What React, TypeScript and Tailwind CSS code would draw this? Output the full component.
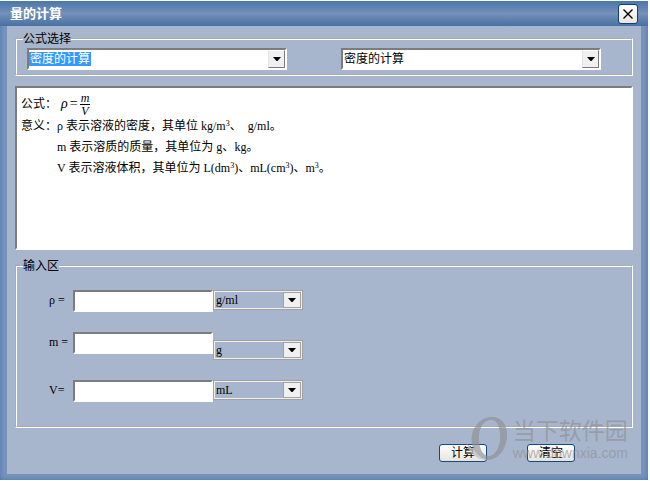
import { ReactNode, useState } from "react";
import clsx from "clsx";

const FORMULAS = ["密度的计算"];

const FIELDS = [
  { id: "rho", label: "ρ =", units: ["g/ml", "kg/m³"], low: false },
  { id: "mass", label: "m =", units: ["g", "kg"], low: true },
  { id: "volume", label: "V=", units: ["mL", "L", "m³"], low: false },
];

const SUNKEN =
  "border-2 border-t-[#7c7c7c] border-l-[#7c7c7c] border-r-white border-b-white";

const Arrow = () => (
  <svg viewBox="0 0 8 4" className="h-1 w-2" aria-hidden="true">
    <path d="M0 0h8L4.5 4h-1z" fill="#000" />
  </svg>
);

const FormulaSelect = ({
  label,
  selected,
}: {
  label: string;
  selected?: boolean;
}) => (
  <div className={clsx("relative flex h-[22px] w-[260px] bg-white", SUNKEN)}>
    <select
      aria-label={label}
      className={clsx(
        "w-full appearance-none pl-px text-xs leading-4 outline-none",
        selected &&
          "bg-[linear-gradient(#3399ff,#3399ff)] bg-[length:62px_14px] bg-[position:0px_2px] bg-no-repeat text-white",
      )}
    >
      {FORMULAS.map(name => (
        <option key={name}>{name}</option>
      ))}
    </select>
    <span className="pointer-events-none absolute inset-y-0 right-0 flex w-[17px] items-center justify-center border border-t-white border-r-[#7a7a7a] border-b-[#7a7a7a] border-l-[#e3e3e3] bg-[#f0f0f0]">
      <Arrow />
    </span>
  </div>
);

const UnitSelect = ({ label, units }: { label: string; units: string[] }) => (
  <div className="relative flex h-5 w-[90px] border border-[#a0a0a0]">
    <select
      aria-label={label}
      className="w-full appearance-none border border-[#f0f0f0] pl-px font-['Liberation_Serif','Noto_Sans_CJK_SC',serif] text-xs leading-4 outline-none"
    >
      {units.map(unit => (
        <option key={unit}>{unit}</option>
      ))}
    </select>
    <span className="pointer-events-none absolute inset-y-px right-px flex w-[18px] items-center justify-center border border-[#a0a0a0] bg-[#f0f0f0]">
      <Arrow />
    </span>
  </div>
);

const PushButton = ({
  children,
  onClick,
}: {
  children: ReactNode;
  onClick?: () => void;
}) => (
  <button
    type="button"
    onClick={onClick}
    className="h-[18px] w-12 rounded-[3px] border border-[#0f4a85] bg-linear-to-b from-white to-[#e6e4dc] text-xs leading-4"
  >
    {children}
  </button>
);

const Serif = ({ children }: { children: ReactNode }) => (
  <span className="font-['Liberation_Serif','Noto_Sans_CJK_SC',serif]">
    {children}
  </span>
);

const Cubed = () => <sup className="top-[-4px] text-[8px]">3</sup>;

const Watermark = () => (
  <div className="pointer-events-none absolute right-5 bottom-[18px] flex items-center text-[#8c8f94]/65">
    <svg viewBox="0 0 48 46" className="h-[46px] w-12" aria-hidden="true">
      <path
        fill="currentColor"
        fillRule="evenodd"
        d="M27 1C37 1 43 9 42 21C41 34 33 44 22 44C12 44 5 38 1 26C3 30 6 32 8 32C3 17 12 1 27 1ZM26 4C18 4 13 14 14 25C15 35 19 41 25 40C32 38 36 28 35 18C34 8 31 4 26 4Z"
      />
      <path
        fill="#fff"
        fillOpacity="0.35"
        d="M1 26C3 30 6 32 8 32C11 38 16 42 22 44C12 45 4 38 1 26Z"
      />
    </svg>
    <div className="flex flex-col items-start">
      <span className="text-[23px] leading-7">当下软件园</span>
      <span className="font-['Liberation_Sans',sans-serif] text-sm leading-4">
        www.downxia.com
      </span>
    </div>
  </div>
);

const App = () => {
  const [values, setValues] = useState<Record<string, string>>({});

  return (
    <div className="flex min-h-screen bg-white py-px pr-0.5 font-['Liberation_Sans','Noto_Sans_CJK_SC',sans-serif] text-xs text-black">
      <div className="relative flex w-full flex-col bg-[#7693bc] px-[7px] pb-1.5 shadow-[inset_0_0_5px_#4a74aa]">
        <header className="-mx-[7px] flex h-[25px] items-center justify-between bg-linear-to-b from-[#4a76ab] via-[#7491b8] to-[#4770a3] px-2.5">
          <h1 className="text-[13px] font-bold text-white">量的计算</h1>
          <button
            type="button"
            aria-label="关闭"
            className="flex size-5 items-center justify-center rounded-[3px] border border-[#0f3f75] bg-linear-to-b from-white to-[#e8e6e0]"
          >
            <svg viewBox="0 0 10 10" className="size-2.5" aria-hidden="true">
              <path d="M0.5 0.5l9 9M9.5 0.5l-9 9" stroke="#000" strokeWidth="1.4" />
            </svg>
          </button>
        </header>

        <main className="flex flex-1 flex-col bg-[#a8b6cd] px-2 pt-[5px]">
          <fieldset className="border-2 border-white pb-1 [border-style:groove]">
            <legend className="ml-1.5 leading-4">公式选择</legend>
            <div className="flex gap-[54px] px-2.5 pt-px">
              <FormulaSelect label="类别" selected />
              <FormulaSelect label="公式" />
            </div>
          </fieldset>

          <section
            className={clsx("mt-2.5 min-h-[164px] bg-white px-1 pt-1", SUNKEN)}
          >
            <div className="flex h-6 items-center">
              公式：
              <span className="ml-1 flex items-center gap-0.5 font-['Liberation_Serif',serif] text-sm italic">
                ρ<span className="not-italic">=</span>
                <span className="flex flex-col text-center text-xs">
                  <span className="border-b border-black px-px leading-3">
                    m
                  </span>
                  <span className="leading-3">V</span>
                </span>
              </span>
            </div>
            <p className="leading-[21px]">
              意义：<Serif>ρ </Serif>表示溶液的密度，其单位
              <Serif>
                {" "}
                kg/m
                <Cubed />
              </Serif>
              、<Serif>&nbsp; g/ml</Serif>。
            </p>
            <p className="pl-9 leading-[21px]">
              <Serif>m </Serif>表示溶质的质量，其单位为<Serif> g</Serif>、
              <Serif>kg</Serif>。
            </p>
            <p className="pl-9 leading-[21px]">
              <Serif>V </Serif>表示溶液体积，其单位为
              <Serif>
                {" "}
                L(dm
                <Cubed />)
              </Serif>
              、
              <Serif>
                mL(cm
                <Cubed />)
              </Serif>
              、
              <Serif>
                m<Cubed />
              </Serif>
              。
            </p>
          </section>

          <fieldset className="mt-2 border-2 border-white pb-6 [border-style:groove]">
            <legend className="ml-1.5 leading-4">输入区</legend>
            <div className="flex flex-col gap-5 pt-4 pl-8">
              {FIELDS.map(field => (
                <div key={field.id} className="flex items-start">
                  <label
                    htmlFor={field.id}
                    className="w-6 font-['Liberation_Serif',serif] leading-5 whitespace-nowrap"
                  >
                    {field.label}
                  </label>
                  <input
                    id={field.id}
                    type="text"
                    value={values[field.id] ?? ""}
                    onChange={event =>
                      setValues({ ...values, [field.id]: event.target.value })
                    }
                    className={clsx(
                      "h-[22px] w-[140px] bg-white px-1 outline-none",
                      SUNKEN,
                    )}
                  />
                  <div className={clsx(field.low && "pt-2")}>
                    <UnitSelect
                      label={`${field.label} 单位`}
                      units={field.units}
                    />
                  </div>
                </div>
              ))}
            </div>
          </fieldset>

          <div className="flex justify-end gap-10 pt-4 pr-[58px] pb-3">
            <PushButton>计算</PushButton>
            <PushButton onClick={() => setValues({})}>清空</PushButton>
          </div>
        </main>
        <Watermark />
      </div>
    </div>
  );
};

export default App;
